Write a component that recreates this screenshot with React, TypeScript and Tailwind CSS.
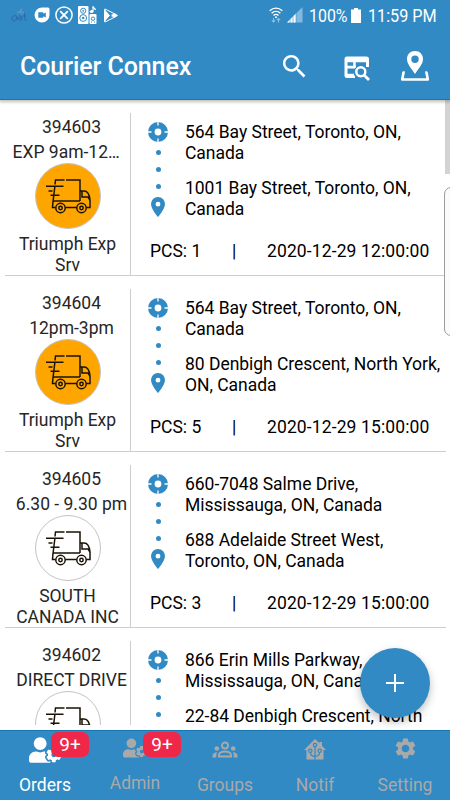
import type { ReactNode } from 'react'
import { FaUserCog } from 'react-icons/fa'
import { MdSearch, MdSettings } from 'react-icons/md'

type Order = {
  id: string
  slot: string
  customer: string
  urgent: boolean
  from: string[]
  to: string[]
  pcs: number
  date: string
}

const orders: Order[] = [
  {
    id: '394603',
    slot: 'EXP 9am-12…',
    customer: 'Triumph Exp Srv',
    urgent: true,
    from: ['564 Bay Street, Toronto, ON,', 'Canada'],
    to: ['1001 Bay Street, Toronto, ON,', 'Canada'],
    pcs: 1,
    date: '2020-12-29 12:00:00',
  },
  {
    id: '394604',
    slot: '12pm-3pm',
    customer: 'Triumph Exp Srv',
    urgent: true,
    from: ['564 Bay Street, Toronto, ON,', 'Canada'],
    to: ['80 Denbigh Crescent, North York,', 'ON, Canada'],
    pcs: 5,
    date: '2020-12-29 15:00:00',
  },
  {
    id: '394605',
    slot: '6.30 - 9.30 pm',
    customer: 'SOUTH CANADA INC',
    urgent: false,
    from: ['660-7048 Salme Drive,', 'Mississauga, ON, Canada'],
    to: ['688 Adelaide Street West,', 'Toronto, ON, Canada'],
    pcs: 3,
    date: '2020-12-29 15:00:00',
  },
]

// last row is only partly visible above the tab bar
const partial = {
  id: '394602',
  slot: 'DIRECT DRIVE',
  urgent: false,
  from: ['866 Erin Mills Parkway,', 'Mississauga, ON, Canada'],
  to: ['22-84 Denbigh Crescent, North'],
}

function StatusBar() {
  return (
    <div className="flex h-[30px] items-center justify-between pl-[11px] pr-[13px]">
      <div className="flex items-center">
        <svg width="17" height="16" viewBox="0 0 17 16" fill="none" stroke="#2d68ad" strokeWidth="1">
          <path d="M5.500 9C3 8 .8 9.500 1 12s3 2.500 4 .5l1-3v3.500M8 9c2.500-.5 3 1.500 2.500 4H8c-1.500-1.500.5-3 2.500-2.500" />
          <path d="M13.500 6v5.500c0 2 1.500 2 2.500 1M11.500 9h4" />
          <path d="M6 6l4-2 3 2M11 1.500l-2 3 2 3" stroke="#6c9cc4" />
        </svg>
        <svg className="ml-[6px]" width="16" height="16" viewBox="0 0 16 16">
          <path d="M8 .5h6A1.500 1.500 0 0 1 15.500 2v6A7.500 7.500 0 1 1 8 .5z" fill="#fff" />
          <path d="M4.300 5.300h5v1.500L11.800 5.600v4.800L9.300 9.200v1.500h-5z" fill="#318ac4" />
        </svg>
        <svg className="ml-[5px]" width="18" height="18" viewBox="0 0 18 18" fill="none" stroke="#fff" strokeWidth="1.500">
          <circle cx="9" cy="9" r="8.100" />
          <path d="M5.200 5.200l7.600 7.600M12.800 5.200l-7.600 7.600" strokeWidth="1.800" />
        </svg>
        <svg className="ml-[5px]" width="19" height="18" viewBox="0 0 19 18">
          <rect width="10.500" height="18" rx="1" fill="#fff" />
          <g fill="none" stroke="#318ac4">
            <circle cx="5.200" cy="4.800" r="2.600" />
            <circle cx="5.200" cy="12" r="3.400" />
          </g>
          <circle cx="5.200" cy="4.800" r=".9" fill="#318ac4" />
          <circle cx="5.200" cy="12" r="1.200" fill="#318ac4" />
          <rect x="11.500" y="8" width="7" height="10" rx="1" fill="#fff" />
          <circle cx="15" cy="12.700" r="1.700" fill="none" stroke="#318ac4" />
          <path d="M13 16h1M16 16h1" stroke="#318ac4" />
          <path d="M15 .5c.5 2 2 1.500 2.500 3.500" fill="none" stroke="#fff" strokeWidth="1.300" />
          <path d="M15 .5v5" stroke="#fff" strokeWidth="1.200" />
          <ellipse cx="13.600" cy="5.500" rx="1.900" ry="1.500" fill="#fff" />
        </svg>
        <svg className="ml-[7px]" width="14" height="15" viewBox="0 0 14 15">
          <path d="M0 .5v14L6 7.500z" fill="#fff" />
          <path d="M1 1l11 5.500c1.500.8 1.500 1.200 0 2L1 14" fill="none" stroke="#fff" strokeWidth="1" />
          <path d="M6.500 7.500L9.300 4.800l4.200 2.400v.6L9.300 10.200z" fill="#fff" />
          <path d="M2 2l7.500 8.200M2 13l7.500-8.200" stroke="#318ac4" strokeWidth=".7" />
        </svg>
      </div>
      <div className="flex items-center text-white">
        <svg width="14" height="16" viewBox="0 0 14 16" fill="none" stroke="#fff" strokeWidth="1.400">
          <path d="M.7 3.700C4.300.2 9.700.2 13.300 3.700M2.600 6.200c2.600-2.500 6.200-2.500 8.800 0M4.500 8.600c1.500-1.500 3.500-1.500 5 0" />
          <circle cx="7" cy="10.200" r="1" fill="#fff" stroke="none" />
          <path d="M4.500 11v4M2.800 13.300l1.700 1.700 1.700-1.700M9.500 15.500v-4M7.800 13.200l1.700-1.700 1.700 1.700" stroke="#8fc0e0" strokeWidth="1.100" />
        </svg>
        <svg className="ml-1" width="16" height="16" viewBox="0 0 16 16">
          <path d="M15.500 0v15.500H0z" fill="#84b8dc" />
          <path d="M9 6.500v9H0z" fill="#fff" />
          <path d="M3 12v4M6 9v7M9 6v10" stroke="#318ac4" strokeWidth=".6" />
        </svg>
        <span className="ml-[6px] w-[38px] pt-[2px] text-[18.500px] leading-none"><span className="inline-block origin-left scale-x-[0.86]">100%</span></span>
        <svg className="ml-[4px]" width="10" height="15" viewBox="0 0 10 15">
          <path d="M3 0h4v1.500h3V15H0V1.500h3z" fill="#fff" />
        </svg>
        <span className="ml-[7px] w-[69px] whitespace-nowrap pt-[2px] text-[18.500px] leading-none"><span className="inline-block origin-left scale-x-[0.875]">11:59 PM</span></span>
      </div>
    </div>
  )
}

function Header() {
  return (
    <header className="relative z-10 h-[100px] border-b border-[#1777b4] bg-[#318ac4] shadow-[0_1px_3px_1px_rgba(110,95,75,0.4)]">
      <StatusBar />
      <div className="flex h-[70px] items-center pl-5">
        <h1 className="mt-[2px] w-[255px] whitespace-nowrap text-[25px] font-medium leading-none tracking-[-0.08px] text-white">Courier Connex</h1>
        <MdSearch className="ml-[4px] mt-[2px] text-white" size={31} />
        <svg className="ml-[34px] mt-[7px]" width="27" height="26" viewBox="0 0 27 26">
          <path fillRule="evenodd" fill="#fff" d="M2.500.5h20A2.500 2.500 0 0 1 25 3v19H3A2.500 2.500 0 0 1 .5 19.500V3A2.500 2.500 0 0 1 2.500.5zM3.500 6.200v3.600h5.700V6.200zM11.700 6.200v6H22v-6zM3.500 12.500v5.300h7v-5.300z" />
          <path d="M10 12.500h5v10h-5zM15 9.500h11V26H12z" fill="#318ac4" />
          <path d="M9 9.800h3v2.500H9zM3.500 19.500H11V22H3.500z" fill="#fff" />
          <path d="M22 6h3v5h-3z" fill="#fff" />
          <circle cx="16.800" cy="15.800" r="6.800" fill="#318ac4" />
          <circle cx="16.800" cy="15.800" r="4.500" fill="none" stroke="#fff" strokeWidth="2.500" />
          <path d="M20 19l5 5" stroke="#fff" strokeWidth="2.800" />
        </svg>
        <svg className="ml-[29px] mt-[2px]" width="30" height="32" viewBox="0 0 30 32">
          <path fillRule="evenodd" fill="#fff" d="M15 1C10.300 1 7 4.500 7 9c0 5.500 5 10 8 15 3-5 8-9.500 8-15 0-4.500-3.300-8-8-8zm0 4.500a3.700 3.700 0 1 1 0 7.400 3.700 3.700 0 0 1 0-7.400z" />
          <path d="M4.800 22.500h-1.300L2.200 29.500h25.600l-1.300-7h-1.300" fill="none" stroke="#fff" strokeWidth="2.600" strokeLinejoin="round" />
        </svg>
      </div>
    </header>
  )
}

function Truck({ urgent }: { urgent: boolean }) {
  return (
    <div className={`-mt-[2px] h-[66px] w-[66px] shrink-0 rounded-full border border-[#c4c4c4] ${urgent ? 'bg-[#ffa500]' : 'bg-white'}`}>
      <svg width="64" height="64" viewBox="0 0 64 64" fill="none" stroke="#1a1205" strokeWidth="1.500">
        <path d="M19 20.500l.5-4.500h9M30 16h14v21M18.800 23l-1.700 14H44M17 37l-.5 6.500h3M29.500 43.500h11M50.500 43.500h3.500V36" />
        <path d="M10 22.200h17.500M12.500 27h4M14.500 31.200h9" />
        <path d="M44 27h4c3.500 0 5.500 4 6 9l-2-3h-6v-6" />
        <circle cx="24.500" cy="44" r="4.700" />
        <circle cx="24.500" cy="44" r="1.700" />
        <circle cx="45.500" cy="44" r="4.700" />
        <circle cx="45.500" cy="44" r="1.700" />
      </svg>
    </div>
  )
}

function Route() {
  return (
    <div className="flex w-5 flex-col items-center pt-[9px]">
      <svg width="20" height="20" viewBox="0 0 20 20">
        <circle cx="10" cy="10" r="6.700" fill="none" stroke="#318ac4" strokeWidth="6.600" />
        <path d="M10 0v3.500M10 16.500V20M0 10h3.500M16.500 10H20" stroke="#fff" strokeWidth="1.300" />
      </svg>
      <span className="mt-[8px] h-[5px] w-[5px] rounded-full bg-[#318ac4]" />
      <span className="mt-[12px] h-[5px] w-[5px] rounded-full bg-[#318ac4]" />
      <span className="mt-[12px] h-[5px] w-[5px] rounded-full bg-[#318ac4]" />
      <svg className="mt-[8px]" width="14" height="20" viewBox="0 0 14 20">
        <path fillRule="evenodd" fill="#318ac4" d="M7 0a7 7 0 0 0-7 7c0 5 7 13 7 13s7-8 7-13a7 7 0 0 0-7-7zm0 4.800a2.400 2.400 0 1 1 0 4.800 2.400 2.400 0 0 1 0-4.800z" />
      </svg>
    </div>
  )
}

function OrderRow({ order }: { order: Omit<Order, 'customer' | 'pcs' | 'date'> & Partial<Order> }) {
  return (
    <li className="ml-[5px] mr-1 flex h-[176px] shrink-0 border-b border-[#cdcdcd] pt-[13px]">
      <div className="flex w-[126px] shrink-0 flex-col items-center border-r border-[#cdcdcd] pt-[2px] text-center text-[17.500px] text-[#262626]">
        <p className="ml-[8px] w-[118px] leading-[25px]">{order.id}</p>
        <p className={`ml-[8px] w-[118px] whitespace-nowrap leading-[25px] ${order.slot.endsWith('…') ? 'text-left' : ''}`}>{order.slot}</p>
        <Truck urgent={order.urgent} />
        {order.customer && <p className="mt-[5px] w-[112px] leading-[20.500px]">{order.customer}</p>}
      </div>
      <div className="min-w-0 flex-1 text-[17.500px] text-black">
        <div className="flex pl-[17px]">
          <Route />
          <div className="ml-[17px] whitespace-nowrap pt-[9px] leading-[20.500px] tracking-[-0.03px]">
            {order.from.map(line => <p key={line}>{line}</p>)}
            <div className="h-[15px]" />
            {order.to.map(line => <p key={line}>{line}</p>)}
          </div>
        </div>
        {order.date && (
          <div className="mt-[22px] flex whitespace-nowrap pl-[19px] leading-[21px]">
            <span className="w-[82px]">PCS: {order.pcs}</span>
            <span className="w-[35px]">|</span>
            <span className="tracking-[0.12px]">{order.date}</span>
          </div>
        )}
      </div>
    </li>
  )
}

function GroupsIcon() {
  return (
    <svg width="26" height="20" viewBox="0 0 26 20" fill="none" stroke="#a9a9a9" strokeWidth="1.900">
      <circle cx="13" cy="5.500" r="3" />
      <circle cx="4.800" cy="8.500" r="2.300" fill="#a9a9a9" stroke="none" />
      <circle cx="21.200" cy="8.500" r="2.300" fill="#a9a9a9" stroke="none" />
      <path d="M6.900 16.500v-1.200c0-2.600 3.200-3.800 6.100-3.800s6.100 1.200 6.100 3.800v1.200z" />
      <path d="M.5 17.400v-2c0-2 2-3 4.800-3.200-.8 1-1 2-1 3.200v2zM25.500 17.400v-2c0-2-2-3-4.800-3.200.8 1 1 2 1 3.200v2z" fill="#a9a9a9" stroke="none" />
    </svg>
  )
}

function HomeTreeIcon() {
  return (
    <svg className="-mt-[2px]" width="22" height="21" viewBox="0 0 22 21">
      <path d="M11 0l4.500 4.300V3H18v3.800l4 4.200h-2.500v9.500h-17V11H0z" fill="#a9a9a9" />
      <g fill="none" stroke="#318ac4" strokeWidth="1.200">
        <path d="M11 20.500V7.500M11 17.300c-2.700 0-4.500-1-4.500-3.800M11 17.300c2.700 0 4.500-1 4.500-3.800" />
        <circle cx="11" cy="6" r="1.700" fill="#a9a9a9" />
        <circle cx="6.300" cy="11.800" r="1.700" fill="#a9a9a9" />
        <circle cx="15.700" cy="11.800" r="1.700" fill="#a9a9a9" />
      </g>
    </svg>
  )
}

type TabProps = { icon: ReactNode; label: string; active?: boolean; badge?: string; raised?: boolean }

function Tab({ icon, label, active, badge, raised }: TabProps) {
  return (
    <div className={`relative flex flex-col items-center ${active ? 'text-white' : 'text-[#a9a9a9]'}`}>
      <div className="flex h-[38px] items-center justify-center">{icon}</div>
      {badge && (
        <span className={`absolute top-[1px] flex h-[25px] w-[38px] items-center justify-center rounded-[7px] bg-[#ef2849] text-[19px] leading-none text-white ${active ? 'left-[51px]' : 'left-[53px]'}`}>
          {badge}
        </span>
      )}
      <span className={`text-[17.500px] leading-[22px] ${raised ? 'mt-[3px]' : 'mt-[5px]'}`}>{label}</span>
    </div>
  )
}

export default function App() {
  return (
    <div className="relative flex h-[800px] w-[450px] flex-col overflow-hidden bg-white font-[Roboto,sans-serif]">
      <Header />
      <ul className="flex h-[625px] flex-col overflow-hidden">
        {orders.map(o => <OrderRow key={o.id} order={o} />)}
        <OrderRow order={partial} />
      </ul>

      {/* scrollbar and edge panel handle */}
      <div className="absolute right-0 top-[100px] h-[74px] w-[5px] bg-[#d3d3d3]" />
      <div className="absolute right-[-8px] top-[187px] h-[149px] w-[14px] rounded-[7px] border border-[#9d9d9d] bg-[#fbfbfb]" />

      <button className="absolute left-[360px] top-[648px] flex h-[70px] w-[70px] items-center justify-center rounded-full bg-[#318ac4] shadow-[0_4px_8px_rgba(0,0,0,0.25)]">
        <svg width="18" height="18" viewBox="0 0 18 18" stroke="#fff" strokeWidth="2">
          <path d="M9 0v18M0 9h18" />
        </svg>
      </button>

      <nav className="relative mt-[5px] grid h-[70px] grid-cols-5 border-t border-[#1777b4] bg-[#318ac4]">
        <Tab icon={<FaUserCog size={32} />} label="Orders" active badge="9+" />
        <Tab icon={<FaUserCog className="-mt-[4px]" size={24} />} label="Admin" badge="9+" raised />
        <Tab icon={<GroupsIcon />} label="Groups" />
        <Tab icon={<HomeTreeIcon />} label="Notif" />
        <Tab icon={<MdSettings className="-mt-[3px]" size={25} />} label="Setting" />
      </nav>
    </div>
  )
}
